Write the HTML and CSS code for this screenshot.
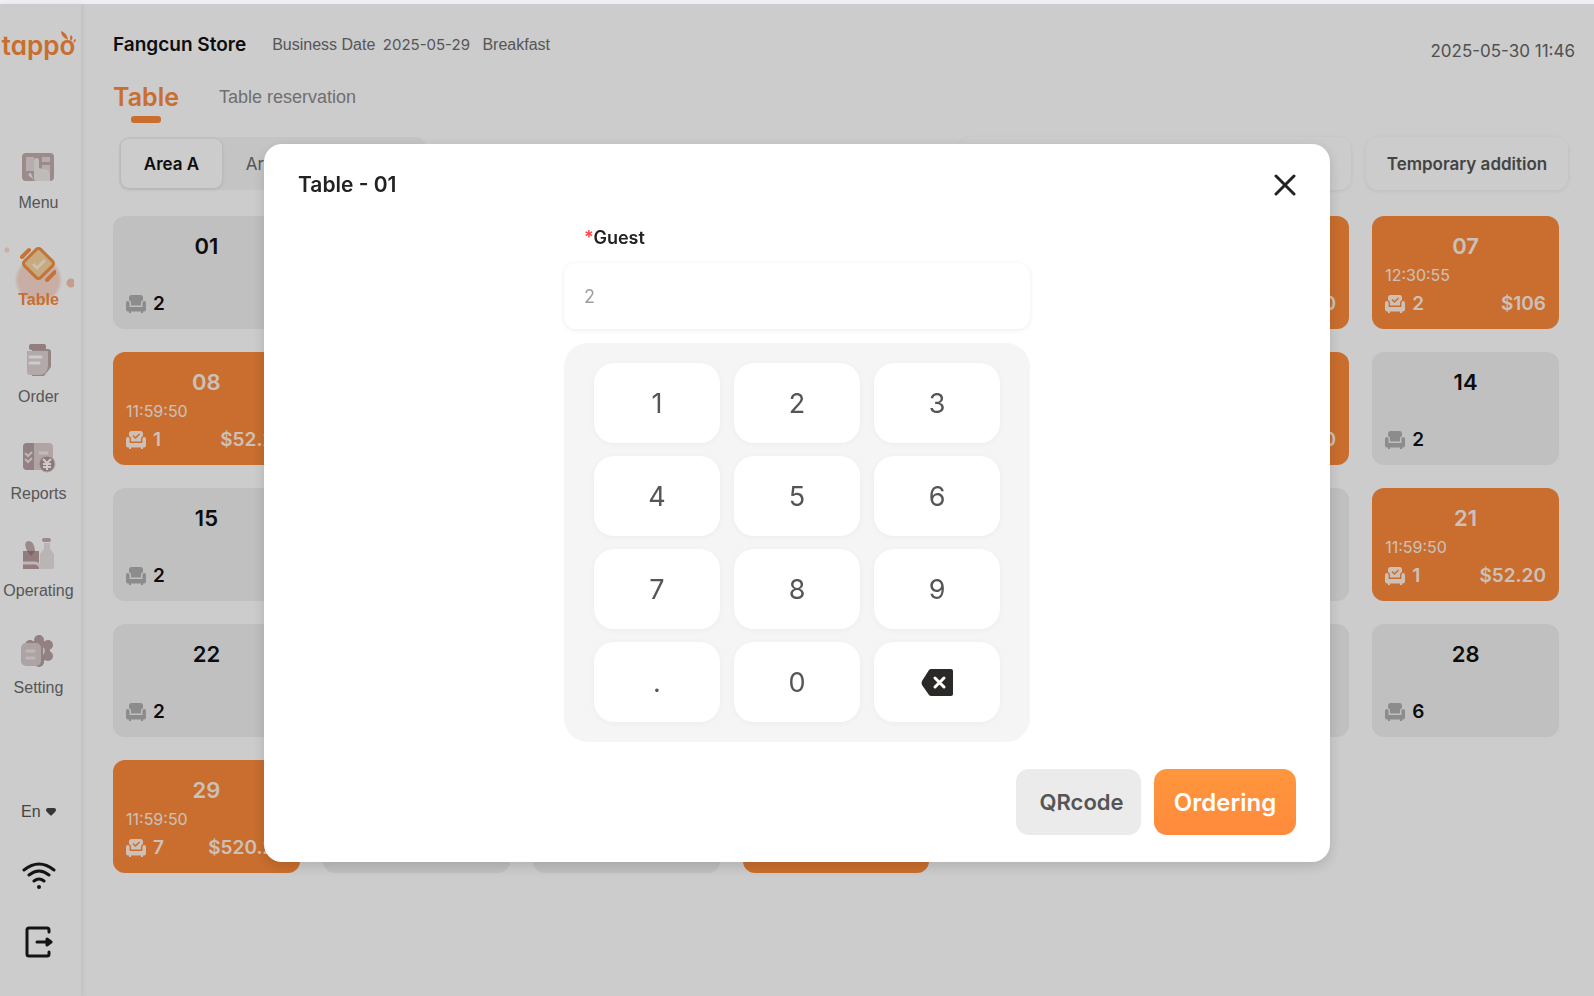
FILE: index.html
```html
<!DOCTYPE html>
<html lang="en">
<head>
    <meta charset="UTF-8">
    <meta name="viewport" content="width=device-width, initial-scale=1.0">
    <title>Tappo - Table</title>
    <link rel="stylesheet" href="styles.css">
</head>
<body>
    <!-- shared icons -->
    <svg class="sprite" aria-hidden="true">
        <symbol id="seat" viewBox="0 0 20 18">
            <path d="M3 5V2.500Q3 0 5.500 0h9Q17 0 17 2.500V5q-2 .4-2 3v2.500H5V8q0-2.600-2-3z"/>
            <path d="M0 8q0-2 1.800-2T3.600 8v4h12.800V8q0-2 1.800-2T20 8v6.500q0 2-2 2h-1V18h-2v-1.500H5V18H3v-1.500H2q-2 0-2-2z"/>
        </symbol>
        <symbol id="seat-busy" viewBox="0 0 20 18">
            <path d="M3 5V2.500Q3 0 5.500 0h9Q17 0 17 2.500V5q-2 .4-2 3v2.500H5V8q0-2.600-2-3z"/>
            <path d="M0 8q0-2 1.800-2T3.600 8v4h12.800V8q0-2 1.800-2T20 8v6.500q0 2-2 2h-1V18h-2v-1.500H5V18H3v-1.500H2q-2 0-2-2z"/>
            <path d="M7 4.500l2.500 2.500 4-4" fill="none" stroke="#fc8a3a" stroke-width="1.500"/>
        </symbol>
    </svg>

    <div class="topbar"></div>
    <div class="app">
        <aside class="sidebar">
            <div class="logo">
                tappo
                <svg class="logo-leaf" viewBox="0 0 18 16" width="18" height="16" aria-hidden="true">
                    <path d="M2 1q6 2 7 9Q2 7 2 1z"/>
                    <path d="M12 5q3 2 0 6-2-3 0-6zM16 9q2 1-1 4-1-3 1-4z"/>
                </svg>
            </div>
            <nav class="menu">
                <a href="#menu" class="menu-item">
                    <svg viewBox="0 0 36 36" width="36" height="36">
                        <rect x="2" y="4" width="32" height="28" rx="4" fill="#c4aeae"/>
                        <path d="M6 8h8v14H6zM22 8h8v5h-8zM22 16h8v8h-8z" fill="#e6d9da"/>
                        <path d="M14 32V12q0-3 2.500-3t2.500 3v7l8 2q3 1 3 4v7H16l-7-5q-2-3 2-3z" fill="#eeeaea"/>
                    </svg>
                    <span>Menu</span>
                </a>
                <a href="#table" class="menu-item active">
                    <svg viewBox="0 0 36 36" width="36" height="36">
                        <path d="M2 11L9 4M27 34l8-8" stroke="#f5924a" stroke-width="4" stroke-linecap="round"/>
                        <rect x="7" y="6" width="23" height="23" rx="3" transform="rotate(45 18.500 17.500)" fill="#fbd5a0" stroke="#f69142" stroke-width="3"/>
                        <path d="M13 18l4 4 8-8" fill="none" stroke="#fff0dc" stroke-width="3"/>
                    </svg>
                    <span>Table</span>
                </a>
                <a href="#order" class="menu-item">
                    <svg viewBox="0 0 36 36" width="36" height="36">
                        <path d="M12 6h16q3 0 3 3v15l-7 9H12z" fill="#b9a6a6"/>
                        <path d="M7 8h21v14q0 10-9 10H10q-3 0-3-3z" fill="#e1d4d5"/>
                        <rect x="9" y="1" width="17" height="6" rx="2" fill="#b89d9e"/>
                        <path d="M10 14h11M10 20h9" stroke="#fff" stroke-width="3" stroke-linecap="round"/>
                    </svg>
                    <span>Order</span>
                </a>
                <a href="#reports" class="menu-item">
                    <svg viewBox="0 0 36 36" width="36" height="36">
                        <rect x="3" y="3" width="30" height="27" rx="4" fill="#dccdce"/>
                        <path d="M14 3H7Q3 3 3 7v19q0 4 4 4h7z" fill="#b7a1a3"/>
                        <path d="M5 13l3 3 4-4M5 19l3 3 4-4" fill="none" stroke="#eee5e5" stroke-width="2"/>
                        <path d="M19 13h9" stroke="#f2ecec" stroke-width="3"/>
                        <circle cx="27" cy="24" r="8" fill="#b39697" stroke="#dccdce"/>
                        <path d="M23 19l4 4 4-4M27 23v7M23 24h8M23 27h8" fill="none" stroke="#fff" stroke-width="2"/>
                    </svg>
                    <span>Reports</span>
                </a>
                <a href="#operating" class="menu-item">
                    <svg viewBox="0 0 36 36" width="36" height="36">
                        <path d="M24 6h6v6l4 5v13q0 2-2 2H20V17l4-5z" fill="#e6e3e2"/>
                        <rect x="22" y="1" width="9" height="4" rx="2" fill="#c3adae"/>
                        <path d="M7 14q-4-9 1-10 6-1 7 10z" fill="#c3adae"/>
                        <rect x="3" y="14" width="16" height="18" fill="#b79b9e"/>
                        <path d="M7 14h8l-4 5z" fill="#9e7d81"/>
                        <path d="M3 26h12q4 0 6 6" fill="none" stroke="#eee5e5" stroke-width="3"/>
                    </svg>
                    <span>Operating</span>
                </a>
                <a href="#setting" class="menu-item">
                    <svg viewBox="0 0 36 36" width="36" height="36">
                        <g fill="#b7a1a3">
                            <circle cx="19" cy="17" r="11"/>
                            <circle cx="19" cy="6" r="5"/>
                            <circle cx="28" cy="11" r="5"/>
                            <circle cx="28" cy="22" r="5"/>
                            <circle cx="19" cy="28" r="5"/>
                            <circle cx="10" cy="11" r="5"/>
                        </g>
                        <path d="M23 13q4 3 0 8z" fill="#eee5e5"/>
                        <rect x="1" y="9" width="20" height="23" rx="5" fill="#d9cccd"/>
                        <path d="M7 17h7M7 24h7" stroke="#eee5e5" stroke-width="3" stroke-linecap="round"/>
                    </svg>
                    <span>Setting</span>
                </a>
            </nav>
            <div class="sidebar-bottom">
                <div class="lang">
                    <select aria-label="Language">
                        <option>En</option>
                    </select>
                    <svg viewBox="0 0 10 8" width="10" height="8" aria-hidden="true">
                        <path d="M0 2Q0 0 2 0h6q2 0 2 2 0 1-1 2L6 7Q5 8 4 7L1 4Q0 3 0 2z"/>
                    </svg>
                </div>
                <svg class="wifi" viewBox="0 0 34 28" width="34" height="28" role="img" aria-label="Wifi">
                    <path d="M2 8Q17-4 32 8M7 13q10-8 20 0M12 19q5-4 10 0"/>
                    <circle cx="17" cy="25" r="2"/>
                </svg>
                <button class="logout" aria-label="Log out">
                    <svg viewBox="0 0 28 32" width="28" height="32">
                        <path d="M24 6V4q0-2-2-2H4Q2 2 2 4v24q0 2 2 2h18q2 0 2-2v-2M12 16h12"/>
                        <path d="M22 13l4 3-4 3z"/>
                    </svg>
                </button>
            </div>
        </aside>

        <main class="content">
            <header class="header">
                <h1>Fangcun Store</h1>
                <p class="business">Business Date <span class="date">2025-05-29</span> Breakfast</p>
                <time class="clock">2025-05-30 11:46</time>
            </header>
            <nav class="tabs">
                <a href="#table" class="tab active">Table</a>
                <a href="#reservation" class="tab">Table reservation</a>
            </nav>
            <div class="toolbar">
                <div class="areas">
                    <button class="area active">Area A</button>
                    <button class="area">Area B</button>
                    <button class="area">Area C</button>
                </div>
                <input type="search" class="search" aria-label="Search table">
                <button class="addition">Temporary addition</button>
            </div>
            <div class="tables" id="tables"></div>
        </main>
    </div>

    <div class="overlay">
        <div class="modal" role="dialog" aria-labelledby="modal-title">
            <div class="modal-header">
                <h2 id="modal-title">Table - 01</h2>
                <button class="close" aria-label="Close">
                    <svg viewBox="0 0 22 22" width="22" height="22">
                        <path d="M2 2l18 18M20 2L2 20"/>
                    </svg>
                </button>
            </div>
            <form class="guest-form">
                <label for="guest"><span class="required">*</span>Guest</label>
                <input type="text" id="guest" placeholder="2">
                <div class="keypad">
                    <button type="button">1</button>
                    <button type="button">2</button>
                    <button type="button">3</button>
                    <button type="button">4</button>
                    <button type="button">5</button>
                    <button type="button">6</button>
                    <button type="button">7</button>
                    <button type="button">8</button>
                    <button type="button">9</button>
                    <button type="button">.</button>
                    <button type="button">0</button>
                    <button type="button" aria-label="Delete">
                        <svg viewBox="0 0 32 27" width="32" height="27">
                            <path d="M10 0h20q2 0 2 2v23q0 2-2 2H10q-1 0-2-1L1 16q-1-2 0-4L8 1q1-1 2-1z" fill="#2a2928"/>
                            <path d="M14 9l9 9M23 9l-9 9" stroke="#fff" stroke-width="3" stroke-linecap="round"/>
                        </svg>
                    </button>
                </div>
            </form>
            <div class="modal-footer">
                <button class="btn btn-gray">QRcode</button>
                <button class="btn btn-orange">Ordering</button>
            </div>
        </div>
    </div>

    <script src="script.js"></script>
</body>
</html>
```
FILE: styles.css
```css
* {
    margin: 0;
    padding: 0;
    box-sizing: border-box;
}

body {
    display: flex;
    flex-direction: column;
    min-height: 100vh;
    font-family: Inter, "Liberation Sans", sans-serif;
    color: #111;
    background-color: #fff;
}

button,
input,
select {
    font-family: inherit;
    border: none;
    background: none;
}

button {
    cursor: pointer;
}

a {
    text-decoration: none;
}

.sprite {
    display: none;
}

.topbar {
    height: 4px;
    background-color: #edeff3;
}

.app {
    flex: 1;
    display: flex;
}

/* Sidebar */
.sidebar {
    width: 81px;
    padding: 26px 4px 38px 0;
    display: flex;
    flex-direction: column;
    align-items: center;
    font-family: "Liberation Sans", sans-serif;
    box-shadow: 2px 0 4px rgba(0, 0, 0, 0.06);
}

.logo {
    position: relative;
    font-family: Inter, sans-serif;
    font-size: 26px;
    line-height: 32px;
    font-weight: 600;
    font-feature-settings: "cv11";
    color: #fc8a3a;
}

.logo-leaf {
    position: absolute;
    top: 0;
    right: -2px;
    fill: #fc8a3a;
}

.menu {
    margin-top: 87px;
    display: flex;
    flex-direction: column;
    gap: 33px;
}

.menu-item {
    display: flex;
    flex-direction: column;
    align-items: center;
    gap: 8px;
    font-size: 16px;
    line-height: 20px;
    color: #6c6c6c;
}

.menu-item.active {
    font-weight: 600;
    color: #fc8a3a;
    background:
        radial-gradient(circle at 68px 37px, #f5c5b0 0 4px, transparent 5px),
        radial-gradient(circle at 4px 4px, #fbdcd0 0 2px, transparent 3px),
        radial-gradient(circle at 50% 34px, #fbdacd 0 20px, transparent 24px);
}

.sidebar-bottom {
    margin-top: auto;
    display: flex;
    flex-direction: column;
    align-items: center;
}

.lang {
    display: flex;
    align-items: center;
    gap: 5px;
    fill: #444;
}

.lang select {
    appearance: none;
    font-size: 16px;
    line-height: 20px;
    color: #555;
}

.wifi {
    margin: 40px 0 36px;
    fill: none;
    stroke: #1a1a1a;
    stroke-width: 3;
    stroke-linecap: round;
}

.wifi circle {
    fill: #1a1a1a;
    stroke: none;
}

.logout svg {
    display: block;
    fill: none;
    stroke: #1a1a1a;
    stroke-width: 3;
    stroke-linecap: round;
    stroke-linejoin: round;
}

/* Main */
.content {
    flex: 1;
    padding: 26px 19px 0 32px;
}

.header {
    display: flex;
    align-items: flex-start;
    line-height: 30px;
}

.header h1 {
    font-size: 19px;
    font-weight: 600;
}

.business {
    margin-left: 26px;
    font-family: "Liberation Sans", sans-serif;
    font-size: 16px;
    color: #6c6c6c;
}

.business .date {
    margin: 0 8px 0 3px;
    font-family: Inter, sans-serif;
    font-size: 15px;
}

.clock {
    margin-left: auto;
    padding-top: 6px;
    font-size: 17px;
    color: #666;
}

.tabs {
    display: flex;
    align-items: flex-start;
    gap: 40px;
    margin-top: 12px;
    line-height: 38px;
}

.tab {
    font-family: "Liberation Sans", sans-serif;
    font-size: 18px;
    color: #8c8c8c;
}

.tab.active {
    font-family: Inter, sans-serif;
    font-size: 25px;
    font-weight: 600;
    color: #fc8a3a;
}

.tab.active::after {
    content: "";
    display: block;
    width: 30px;
    height: 7px;
    margin: 0 auto;
    border-radius: 3px;
    background-color: #fc8a3a;
}

.toolbar {
    display: flex;
    margin-top: 14px;
    padding: 0 7px 0 6px;
}

.areas {
    display: flex;
    padding: 2px;
    border-radius: 10px;
    background-color: #f6f6f6;
}

.area {
    width: 101px;
    height: 49px;
    border-radius: 8px;
    font-size: 17px;
    color: #6c6c6c;
}

.area.active {
    font-weight: 600;
    color: #111;
    background-color: #fff;
    box-shadow: 0 1px 4px rgba(0, 0, 0, 0.12);
}

.search {
    width: 392px;
    margin-left: auto;
    border-radius: 12px;
    box-shadow: 0 1px 4px rgba(0, 0, 0, 0.07);
}

.addition {
    width: 202px;
    margin-left: 15px;
    border-radius: 12px;
    font-size: 17px;
    font-weight: 600;
    color: #555;
    box-shadow: 0 1px 4px rgba(0, 0, 0, 0.08);
}

.tables {
    display: grid;
    grid-template-columns: repeat(7, 1fr);
    gap: 23px;
    margin-top: 26px;
    padding-right: 16px;
}

.card {
    display: flex;
    flex-direction: column;
    height: 113px;
    padding: 17px 13px 13px;
    border-radius: 12px;
    background-color: #f0f0f0;
}

.card h3 {
    font-size: 22px;
    font-weight: 600;
    line-height: 26px;
    text-align: center;
}

.card time {
    margin-top: 6px;
    font-size: 16px;
    line-height: 20px;
}

.card-bottom {
    display: flex;
    align-items: center;
    margin-top: auto;
    font-size: 19px;
    font-weight: 600;
    line-height: 24px;
}

.card-bottom svg {
    width: 20px;
    height: 18px;
    margin-right: 7px;
    fill: #b0b0b0;
}

.card.busy {
    color: #fff1e8;
    background-color: #fc8a3a;
}

.card.busy svg {
    fill: #fff1e8;
}

.amount {
    margin-left: auto;
}

/* Modal */
.overlay {
    position: fixed;
    inset: 4px 0 0 0;
    padding-top: 140px;
    background-color: rgba(0, 0, 0, 0.2);
}

.modal {
    width: 90%;
    max-width: 1066px;
    margin: 0 auto;
    padding: 25px 34px 27px;
    border-radius: 18px;
    background-color: #fff;
    box-shadow: 0 4px 14px rgba(0, 0, 0, 0.15);
}

.modal-header {
    display: flex;
    justify-content: space-between;
    align-items: center;
    line-height: 32px;
}

.modal-header h2 {
    font-size: 21px;
    font-weight: 600;
    color: #222;
}

.close svg {
    display: block;
    fill: none;
    stroke: #222;
    stroke-width: 3;
    stroke-linecap: round;
}

.guest-form {
    width: 466px;
    margin: 25px auto 0;
}

.guest-form label {
    display: block;
    padding-left: 20px;
    font-size: 18px;
    font-weight: 600;
    line-height: 24px;
    color: #222;
}

.required {
    color: #f44;
}

.guest-form input {
    display: block;
    width: 100%;
    height: 66px;
    margin-top: 13px;
    padding: 0 20px;
    border-radius: 12px;
    font-size: 18px;
    box-shadow: 0 1px 5px rgba(0, 0, 0, 0.08);
}

.guest-form input::placeholder {
    color: #a0a0a0;
}

.keypad {
    display: grid;
    grid-template-columns: repeat(3, 1fr);
    gap: 13px 14px;
    margin-top: 14px;
    padding: 20px 30px;
    border-radius: 24px;
    background-color: #f5f5f5;
}

.keypad button {
    display: flex;
    justify-content: center;
    align-items: center;
    height: 80px;
    border-radius: 20px;
    font-size: 27px;
    color: #555;
    background-color: #fff;
    box-shadow: 0 1px 6px rgba(0, 0, 0, 0.04);
}

.modal-footer {
    display: flex;
    justify-content: flex-end;
    gap: 13px;
    margin-top: 27px;
}

.btn {
    height: 66px;
    border-radius: 13px;
    font-size: 22px;
    font-weight: 600;
}

.btn-gray {
    width: 125px;
    padding-left: 6px;
    color: #555;
    background-color: #ebebeb;
}

.btn-orange {
    width: 142px;
    font-size: 24px;
    color: #fff;
    background: linear-gradient(#ff963c, #ff8a3c);
}
```
FILE: script.js
```js
// seats is always shown, time and amount only for occupied tables
const tables = [
    { seats: 2 },
    { seats: 2 },
    { seats: 4 },
    { seats: 4 },
    { seats: 2 },
    { seats: 2, time: '11:59:50', amount: '$52.20' },
    { seats: 2, time: '12:30:55', amount: '$106' },
    { seats: 1, time: '11:59:50', amount: '$52.20' },
    { seats: 2 },
    { seats: 2 },
    { seats: 4 },
    { seats: 4 },
    { seats: 2, time: '11:59:50', amount: '$52.20' },
    { seats: 2 },
    { seats: 2 },
    { seats: 2 },
    { seats: 4 },
    { seats: 4 },
    { seats: 2 },
    { seats: 2 },
    { seats: 1, time: '11:59:50', amount: '$52.20' },
    { seats: 2 },
    { seats: 2 },
    { seats: 4 },
    { seats: 4 },
    { seats: 6 },
    { seats: 6 },
    { seats: 6 },
    { seats: 7, time: '11:59:50', amount: '$520.20' },
    { seats: 6 },
    { seats: 6 },
    { seats: 2, time: '11:59:50', amount: '$52.20' }
];

document.getElementById('tables').innerHTML = tables.map((table, i) => {
    const number = String(i + 1).padStart(2, '0');
    const busy = Boolean(table.time);
    return `
        <article class="card ${busy ? 'busy' : ''}">
            <h3>${number}</h3>
            ${busy ? `<time>${table.time}</time>` : ''}
            <div class="card-bottom">
                <svg aria-hidden="true"><use href="#${busy ? 'seat-busy' : 'seat'}"/></svg>
                <span>${table.seats}</span>
                ${busy ? `<span class="amount">${table.amount}</span>` : ''}
            </div>
        </article>`;
}).join('');
```
